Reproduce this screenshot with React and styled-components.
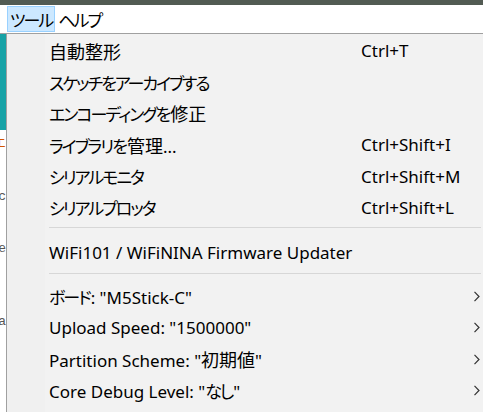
import styled, { createGlobalStyle } from "styled-components";

const GlobalStyle = createGlobalStyle`
  html, body { margin: 0; padding: 0; background: #ffffff; }
  body {
    width: 483px;
    height: 412px;
    overflow: hidden;
    font-family: "Noto Sans", "Noto Sans CJK JP", sans-serif;
  }
`;

const Window = styled.div`
  display: flex;
  flex-direction: column;
  width: 483px;
  height: 412px;
  overflow: hidden;
`;

const TitleEdge = styled.div`
  height: 5px;
  background: #525b53;
`;

const MenuBar = styled.div`
  display: flex;
  align-items: stretch;
  height: 29px;
  padding: 1px 0 0 7px;
  box-sizing: border-box;
  background: #ffffff;
  border-bottom: 1px solid #a0a0a0;
`;

const MenuTitle = styled.div`
  display: flex;
  align-items: center;
  padding: 0 1px 0 2px;
  margin-bottom: 1px;
  font-size: 17px;
  color: #000;
  box-sizing: border-box;
  border: 1px solid ${(p) => (p.$open ? "#99d1ff" : "transparent")};
  background: ${(p) => (p.$open ? "#cce8ff" : "transparent")};
`;

const Body = styled.div`
  display: flex;
  flex: 1;
  min-height: 0;
`;

const EditorEdge = styled.div`
  width: 6px;
  display: flex;
  flex-direction: column;
  overflow: hidden;
  background: #ffffff;
`;

const Toolbar = styled.div`
  height: 96px;
  flex-shrink: 0;
  background: #17a2a6;
`;

const CodeScrap = styled.div`
  display: flex;
  justify-content: flex-end;
  height: 20px;
  margin-top: ${(p) => p.$gap}px;
  font-family: "Liberation Mono", "Noto Sans CJK JP", monospace;
  font-size: 13px;
  line-height: 20px;
  color: ${(p) => p.$color || "#555"};
  white-space: nowrap;
`;

const Dropdown = styled.div`
  flex: 1;
  border-left: 1px solid #a0a0a0;
  background: linear-gradient(to right, #f0f0f0 0, #f0f0f0 38px, #f2f2f2 38px);
  padding-top: 1px;
`;

const Item = styled.div`
  display: grid;
  grid-template-columns: 312px 1fr 10px;
  align-items: center;
  height: 31.4px;
  padding-left: 42px;
  font-size: 17px;
  color: #000;
  white-space: nowrap;
`;

const Kana = styled.span`
  font-family: "Noto Sans CJK JP", sans-serif;
  font-size: 17px;
  font-feature-settings: "palt";
  letter-spacing: -2px;
  margin-right: 1px;
`;

const Kanji = styled.span`
  font-family: "Noto Sans CJK JP", sans-serif;
  font-size: 18px;
`;

const Separator = styled.div`
  height: 13px;
  display: flex;
  align-items: flex-start;
  padding-left: 42px;
  &::after {
    content: "";
    display: block;
    flex: 1;
    margin-top: ${(p) => p.$offset}px;
    margin-right: 2px;
    height: 1px;
    background: #d7d7d7;
  }
`;

const Chevron = () => (
  <svg width="7" height="11" viewBox="0 0 7 11">
    <polyline points="1.5,0.8 6,5.5 1.5,10.2" fill="none" stroke="#333" strokeWidth="1.2" />
  </svg>
);

// split a label into kana / kanji / latin runs
const Label = ({ text }) => {
  const parts = text.split(/([\u3040-\u30ff]+|[\u4e00-\u9fff]+)/).filter(Boolean);
  return (
    <span>
      {parts.map((p, i) =>
        /[\u3040-\u30ff]/.test(p) ? (
          <Kana key={i}>{p}</Kana>
        ) : /[\u4e00-\u9fff]/.test(p) ? (
          <Kanji key={i}>{p}</Kanji>
        ) : (
          p
        )
      )}
    </span>
  );
};

const groupA = [
  ["自動整形", "Ctrl+T"],
  ["スケッチをアーカイブする", ""],
  ["エンコーディングを修正", ""],
  ["ライブラリを管理...", "Ctrl+Shift+I"],
  ["シリアルモニタ", "Ctrl+Shift+M"],
  ["シリアルプロッタ", "Ctrl+Shift+L"],
];

const groupC = [
  'ボード: "M5Stick-C"',
  'Upload Speed: "1500000"',
  'Partition Scheme: "初期値"',
  'Core Debug Level: "なし"',
];

export default function App() {
  return (
    <>
      <GlobalStyle />
      <Window>
        <TitleEdge />
        <MenuBar>
          <MenuTitle $open><Label text="ツール" /></MenuTitle>
          <MenuTitle><Label text="ヘルプ" /></MenuTitle>
        </MenuBar>
        <Body>
          <EditorEdge>
            <Toolbar />
            <CodeScrap $gap={4} $color="#d35400">エ</CodeScrap>
            <CodeScrap $gap={33}>c</CodeScrap>
            <CodeScrap $gap={32}>e</CodeScrap>
            <CodeScrap $gap={53}>a</CodeScrap>
          </EditorEdge>
          <Dropdown>
            {groupA.map(([label, key]) => (
              <Item key={label}>
                <Label text={label} />
                <span>{key}</span>
                <span />
              </Item>
            ))}
            <Separator $offset={4} />
            <Item>
              <span>WiFi101 / WiFiNINA Firmware Updater</span>
              <span />
              <span />
            </Item>
            <Separator $offset={5} />
            {groupC.map((label) => (
              <Item key={label}>
                <Label text={label} />
                <span />
                <Chevron />
              </Item>
            ))}
          </Dropdown>
        </Body>
      </Window>
    </>
  );
}
